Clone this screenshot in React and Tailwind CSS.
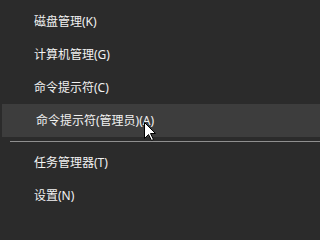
const font = { fontFamily: '"Noto Sans", "Noto Sans CJK SC", sans-serif' };

function Item({ label, active }) {
  return (
    <div
      className={
        "flex items-center h-[33px] pl-[34px] text-[12px] text-[#f2f2f2] leading-none " +
        (active ? "ml-[2px] pl-[32px] bg-[#3d3d3d]" : "")
      }
    >
      {label}
    </div>
  );
}

export default function App() {
  return (
    <div className="min-h-screen w-full bg-[#2b2b2b]">
      <div
        className="relative w-full min-w-[207px] h-[212px] overflow-hidden pt-[5px]"
        style={font}
      >
        <Item label="磁盘管理(K)" />
        <Item label="计算机管理(G)" />
        <Item label="命令提示符(C)" />
        <Item label="命令提示符(管理员)(A)" active />
        <div className="mt-[4px] ml-[10px] h-px bg-[#8f8f8f]" />
        <div className="mt-[4px]">
          <Item label="任务管理器(T)" />
          <Item label="设置(N)" />
        </div>

        {/* mouse pointer */}
        <svg
          className="absolute left-[143.5px] top-[121.5px]"
          width="13"
          height="20"
          viewBox="0 0 13 20"
        >
          <polygon
            points="0.5,0.5 0.5,16.5 4.5,12.5 7.5,18.5 9.5,17.5 6.5,11.5 11.5,11.5"
            fill="#fff"
            stroke="#000"
            strokeWidth="1"
          />
        </svg>
      </div>
    </div>
  );
}
